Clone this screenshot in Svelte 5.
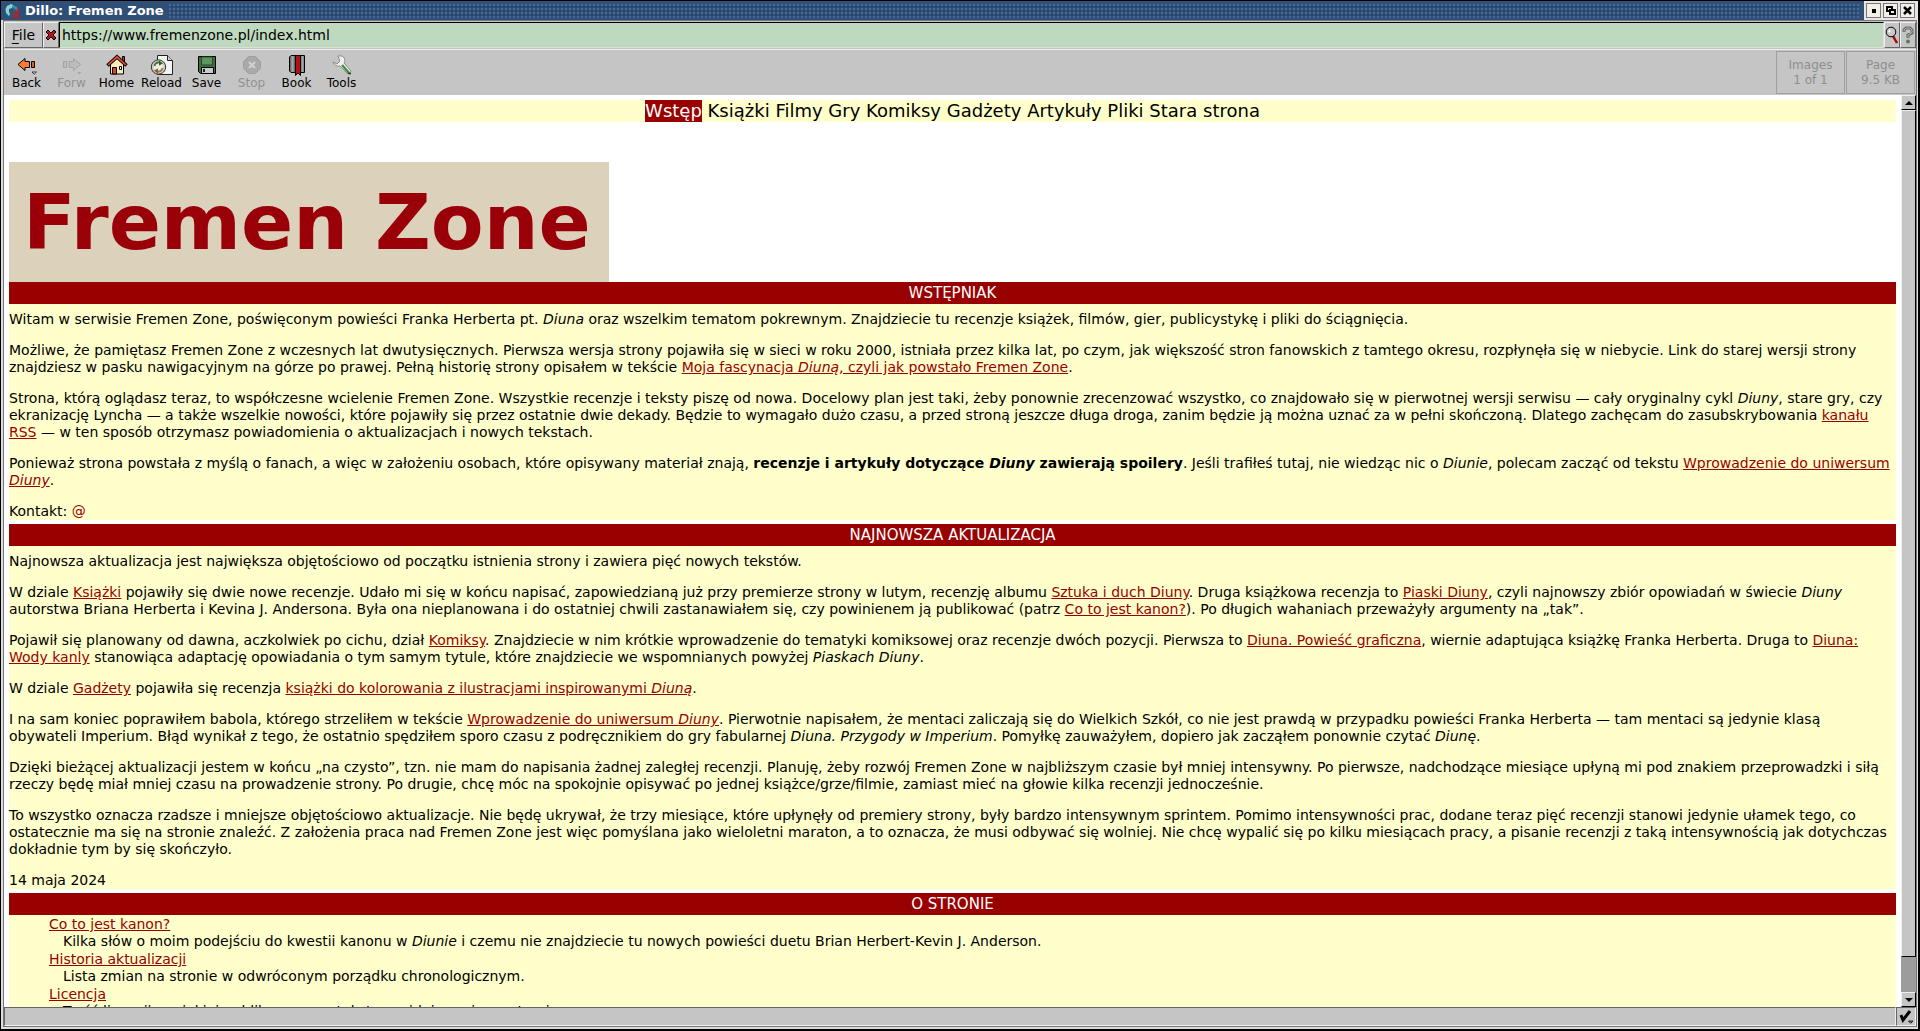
<script>
  const nav = ['Książki', 'Filmy', 'Gry', 'Komiksy', 'Gadżety', 'Artykuły', 'Pliki', 'Stara strona'];
  let url = $state('https://www.fremenzone.pl/index.html');
</script>

<div class="window">
  <header class="titlebar">
    <svg class="logo" width="16" height="16" viewBox="0 0 16 16" aria-hidden="true">
      <circle cx="7.5" cy="8" r="7" fill="#1d5c80" />
      <path d="M1.500 6 3 3 7 1l2 1-1 3-3 1v3l1 2-1 2-3-3z" fill="#8bd3cf" />
      <path d="M9 2l4 2 1 4-2-1-3-2z" fill="#3a91ae" />
      <path d="M14.500 5 13 14h2" fill="none" stroke="#d01818" stroke-width="1.600" />
      <circle cx="11" cy="11.500" r="2.500" fill="none" stroke="#d01818" stroke-width="1.600" />
    </svg>
    <h1>Dillo: Fremen Zone</h1>
    <span class="dots"></span>
    <div class="winbuttons">
      <button aria-label="Minimize"><svg width="11" height="11"><path d="M4 4h4v4H4z" /></svg></button>
      <button aria-label="Restore"><svg width="11" height="11" fill="none" stroke="#000" stroke-width="2"><path d="M2 2h5v4H2z" /><path d="M5 5h5v4H5z" fill="#f1efe6" /></svg></button>
      <button aria-label="Close"><svg width="11" height="11" stroke="#000" stroke-width="2.500"><path d="m2 2 7 7M9 2 2 9" /></svg></button>
    </div>
  </header>

  <div class="frame">
    <div class="location">
      <button class="file"><u>F</u>ile</button>
      <button class="clear" aria-label="Clear address">
        <svg width="12" height="12"><path d="M1 3 3 1l3 3 3-3 2 2-3 3 3 3-2 2-3-3-3 3-2-2 3-3z" fill="#b5121b" stroke="#000" /></svg>
      </button>
      <input type="text" aria-label="Address" bind:value={url} />
      <button class="tool" aria-label="Search">
        <svg width="14" height="18"><path d="m8 10 4 7" stroke="#b00000" stroke-width="2.500" /><circle cx="6" cy="6" r="4.800" fill="#c9c9c9" stroke="#000" /><path d="M3 5h3M4.500 3.500v3" stroke="#fff" /></svg>
      </button>
      <button class="tool" aria-label="Help">
        <svg width="12" height="18"><path d="M2 6V4l2-2h4l2 2v3L6 9v3" fill="none" stroke="#666" stroke-width="3" /><path d="M2 5.500V4l2-2h4l2 2v2.500L6 9v2.500" fill="none" stroke="#b5b5b5" /><circle cx="6" cy="15.500" r="1.500" fill="#4a8a3a" stroke="#666" /></svg>
      </button>
    </div>

    <div class="toolbar">
      <div class="actions">
        <button>
          <svg width="22" height="22"><path d="M2 10.500 9 4.500v3h4.500v6H9v3z" fill="#ff7a2a" stroke="#000" /><path d="M15.500 7.500h3v6h-3z" fill="#e85a10" stroke="#000" /><path d="M16 18h4.500L18.200 20.300z" fill="#ddd" stroke="#000" stroke-width=".7" /></svg>
          <span>Back</span>
        </button>
        <button disabled>
          <svg width="22" height="22"><path d="M19.500 10.500 12.500 4.500v3H8v6h4.500v3zM2.500 7.500h3v6h-3z" fill="#bcbcbc" stroke="#a3a3a3" /><path d="M16 18h4.500L18.200 20.300z" fill="#a3a3a3" /></svg>
          <span>Forw</span>
        </button>
        <button>
          <svg width="22" height="22"><path d="M16.500 2.500h2v6h-2z" fill="#d33" stroke="#000" /><path d="M4.500 10 11 4l6.500 6v10h-13z" fill="#fbe9c0" stroke="#000" /><path d="M1.500 11.500 11 3l9.500 8.500" fill="none" stroke="#000" stroke-width="3.600" /><path d="M2.200 10.900 11 3l8.800 7.900" fill="none" stroke="#e0502f" stroke-width="1.700" /><path d="M6.500 13.500h4V20h-4z" fill="#d4481c" stroke="#000" /><path d="M13.500 12.500h2v3h-2z" fill="#fff" stroke="#000" /></svg>
          <span>Home</span>
        </button>
        <button>
          <svg width="24" height="22"><path d="M7.500 1.500h10l5 5v14h-15z" fill="#f4f4f4" stroke="#222" /><path d="M17.500 1.500v5h5" fill="#ccc" stroke="#222" /><circle cx="8.500" cy="13" r="7.200" fill="#c9c9c4" stroke="#333" /><circle cx="8.500" cy="13" r="5" fill="#eeeede" /><path d="M4.500 12q1-4 5.500-3.500" fill="none" stroke="#456b35" stroke-width="1.800" /><path d="m9 6.500 4 3-4 2z" fill="#2d5f2d" /><path d="M12.500 14q-1 4-5.500 3.500" fill="none" stroke="#9a7a45" stroke-width="1.800" /><path d="m8 19.500-4-3 4-2z" fill="#80602f" /></svg>
          <span>Reload</span>
        </button>
        <button>
          <svg width="22" height="22"><path d="M2.500 2.500h17v17H4.500l-2-2z" fill="#3f6f41" stroke="#000" /><path d="M5.500 3h11v8h-11z" fill="#5d955f" stroke="#254a28" /><path d="M5.500 13.500h12v6h-12z" fill="#c9c9cf" stroke="#000" /><path d="M7 15h2v3H7z" fill="#222" /></svg>
          <span>Save</span>
        </button>
        <button disabled>
          <svg width="22" height="22"><path d="M7.500 2.500h7l5 5v7l-5 5h-7l-5-5v-7z" fill="#a9a9a9" stroke="#a0a0a0" /><path d="m8 8 6 6M14 8l-6 6" stroke="#d0d0d0" stroke-width="2.200" /></svg>
          <span>Stop</span>
        </button>
        <button>
          <svg width="22" height="22"><path d="M3.500 3 5 1.500h13.500v17H5L3.500 17z" fill="#6c6c6c" stroke="#000" /><path d="M6.500 2v16M16.500 2v16" stroke="#aaa" stroke-width="2" /><path d="M9.500 1.500h5v20L12 19l-2.500 2.500z" fill="#b80d14" stroke="#000" /></svg>
          <span>Book</span>
        </button>
        <button>
          <svg width="22" height="22"><path d="M7 2q6-1 7 4 0 2-1 3l7 8q0 3-3 3L9 12q-5 1-7-4l4 2 3-3z" fill="#efefef" stroke="#777" stroke-width=".8" /><path d="m11 11 8 9" stroke="#3d8a3d" stroke-width="2.200" /><path d="m17 19 3 1" stroke="#222" /></svg>
          <span>Tools</span>
        </button>
      </div>
      <div class="counter"><span>Images</span><span>1 of 1</span></div>
      <div class="counter"><span>Page</span><span>9.5 KB</span></div>
    </div>

    <div class="viewport">
      <main>
        <nav><a class="current" href="#wstep">Wstęp</a>{#each nav as item}{' '}<a href="#{item}">{item}</a>{/each}</nav>
        <div class="banner">Fremen Zone</div>

        <section>
          <h2>WSTĘPNIAK</h2>
          <div class="text">
            <p>Witam w serwisie Fremen Zone, poświęconym powieści Franka Herberta pt. <em>Diuna</em> oraz wszelkim tematom pokrewnym. Znajdziecie tu recenzje książek, filmów, gier, publicystykę i pliki do ściągnięcia.</p>
            <p>Możliwe, że pamiętasz Fremen Zone z wczesnych lat dwutysięcznych. Pierwsza wersja strony pojawiła się w sieci w roku 2000, istniała przez kilka lat, po czym, jak większość stron fanowskich z tamtego okresu, rozpłynęła się w niebycie. Link do starej wersji strony znajdziesz w pasku nawigacyjnym na górze po prawej. Pełną historię strony opisałem w tekście <a href="#historia">Moja fascynacja <em>Diuną</em>, czyli jak powstało Fremen Zone</a>.</p>
            <p>Strona, którą oglądasz teraz, to współczesne wcielenie Fremen Zone. Wszystkie recenzje i teksty piszę od nowa. Docelowy plan jest taki, żeby ponownie zrecenzować wszystko, co znajdowało się w pierwotnej wersji serwisu — cały oryginalny cykl <em>Diuny</em>, stare gry, czy ekranizację Lyncha — a także wszelkie nowości, które pojawiły się przez ostatnie dwie dekady. Będzie to wymagało dużo czasu, a przed stroną jeszcze długa droga, zanim będzie ją można uznać za w pełni skończoną. Dlatego zachęcam do zasubskrybowania <a href="#rss">kanału RSS</a> — w ten sposób otrzymasz powiadomienia o aktualizacjach i nowych tekstach.</p>
            <p>Ponieważ strona powstała z myślą o fanach, a więc w założeniu osobach, które opisywany materiał znają, <strong>recenzje i artykuły dotyczące <em>Diuny</em> zawierają spoilery</strong>. Jeśli trafiłeś tutaj, nie wiedząc nic o <em>Diunie</em>, polecam zacząć od tekstu <a href="#wprowadzenie">Wprowadzenie do uniwersum <em>Diuny</em></a>.</p>
            <p>Kontakt: <a class="plain" href="#kontakt">@</a></p>
          </div>
        </section>

        <section>
          <h2>NAJNOWSZA AKTUALIZACJA</h2>
          <div class="text">
            <p>Najnowsza aktualizacja jest największa objętościowo od początku istnienia strony i zawiera pięć nowych tekstów.</p>
            <p>W dziale <a href="#ksiazki">Książki</a> pojawiły się dwie nowe recenzje. Udało mi się w końcu napisać, zapowiedzianą już przy premierze strony w lutym, recenzję albumu <a href="#sztuka">Sztuka i duch Diuny</a>. Druga książkowa recenzja to <a href="#piaski">Piaski Diuny</a>, czyli najnowszy zbiór opowiadań w świecie <em>Diuny</em> autorstwa Briana Herberta i Kevina J. Andersona. Była ona nieplanowana i do ostatniej chwili zastanawiałem się, czy powinienem ją publikować (patrz <a href="#kanon">Co to jest kanon?</a>). Po długich wahaniach przeważyły argumenty na „tak”.</p>
            <p>Pojawił się planowany od dawna, aczkolwiek po cichu, dział <a href="#komiksy">Komiksy</a>. Znajdziecie w nim krótkie wprowadzenie do tematyki komiksowej oraz recenzje dwóch pozycji. Pierwsza to <a href="#graficzna">Diuna. Powieść graficzna</a>, wiernie adaptująca książkę Franka Herberta. Druga to <a href="#kanly">Diuna: Wody kanly</a> stanowiąca adaptację opowiadania o tym samym tytule, które znajdziecie we wspomnianych powyżej <em>Piaskach Diuny</em>.</p>
            <p>W dziale <a href="#gadzety">Gadżety</a> pojawiła się recenzja <a href="#kolorowanka">książki do kolorowania z ilustracjami inspirowanymi <em>Diuną</em></a>.</p>
            <p>I na sam koniec poprawiłem babola, którego strzeliłem w tekście <a href="#wprowadzenie">Wprowadzenie do uniwersum <em>Diuny</em></a>. Pierwotnie napisałem, że mentaci zaliczają się do Wielkich Szkół, co nie jest prawdą w przypadku powieści Franka Herberta — tam mentaci są jedynie klasą obywateli&nbsp;Imperium. Błąd wynikał z tego, że ostatnio spędziłem sporo czasu z podręcznikiem do gry fabularnej <em>Diuna. Przygody w Imperium</em>. Pomyłkę zauważyłem, dopiero jak zacząłem ponownie czytać <em>Diunę</em>.</p>
            <p>Dzięki bieżącej aktualizacji jestem w końcu „na czysto”, tzn. nie mam do napisania żadnej zaległej recenzji. Planuję, żeby rozwój Fremen Zone w najbliższym czasie był mniej intensywny. Po pierwsze, nadchodzące miesiące upłyną mi pod znakiem przeprowadzki i siłą rzeczy będę miał mniej czasu na prowadzenie strony. Po drugie, chcę móc na spokojnie opisywać po jednej książce/grze/filmie, zamiast mieć na głowie kilka recenzji jednocześnie.</p>
            <p>To wszystko oznacza rzadsze i mniejsze objętościowo aktualizacje. Nie będę ukrywał, że trzy miesiące, które upłynęły od premiery strony, były bardzo intensywnym sprintem. Pomimo intensywności prac, dodane teraz pięć recenzji stanowi jedynie ułamek tego, co ostatecznie ma się na stronie znaleźć. Z założenia praca nad Fremen Zone jest więc pomyślana jako wieloletni maraton, a to oznacza, że musi odbywać się wolniej. Nie chcę wypalić się po kilku miesiącach pracy, a pisanie recenzji z taką intensywnością jak dotychczas dokładnie tym by się skończyło.</p>
            <p>14 maja 2024</p>
          </div>
        </section>

        <section>
          <h2>O STRONIE</h2>
          <dl>
            <dt><a href="#kanon">Co to jest kanon?</a></dt>
            <dd>Kilka słów o moim podejściu do kwestii kanonu w <em>Diunie</em> i czemu nie znajdziecie tu nowych powieści duetu Brian Herbert-Kevin J. Anderson.</dd>
            <dt><a href="#aktualizacje">Historia aktualizacji</a></dt>
            <dd>Lista zmian na stronie w odwróconym porządku chronologicznym.</dd>
            <dt><a href="#licencja">Licencja</a></dt>
            <dd>Treść licencji, na jakiej publikowane są teksty znajdujące się na stronie.</dd>
          </dl>
        </section>
      </main>
      <div class="scrollbar">
        <button aria-label="Scroll up"><svg width="8" height="4"><path d="M4 0 8 4H0z" /></svg></button>
        <div class="track"><div class="thumb"></div></div>
        <button aria-label="Scroll down"><svg width="8" height="4"><path d="M4 4 8 0H0z" /></svg></button>
      </div>
    </div>

    <footer>
      <div class="status"></div>
      <button aria-label="Page bugs"><svg width="16" height="16"><path d="m3 6 2 5 7-9" fill="none" stroke="#000" stroke-width="3" /><path d="M10.500 12h4.500L12.700 14.300z" fill="#888" stroke="#000" stroke-width=".8" /></svg></button>
    </footer>
  </div>
</div>

<style>
  :global(body) { background: #000; }
  * { box-sizing: border-box; }
  button, input {
    font: inherit;
    color: inherit;
    border: 0;
    border-radius: 0;
    margin: 0;
    padding: 0;
    background: none;
  }
  .window {
    height: 100vh;
    display: flex;
    flex-direction: column;
    padding: 1px 2px 2px 1px;
    background: #000;
    color: #000;
    font: 14px/17px "DejaVu Sans", sans-serif;
    overflow: hidden;
  }
  .titlebar {
    flex: none;
    height: 19px;
    display: flex;
    align-items: center;
    gap: 5px;
    padding-left: 3px;
    background: #304f76;
    color: #fff;
  }
  h1 { margin: 0; font-size: 13px; line-height: 20px; }
  .dots {
    flex: 1;
    align-self: stretch;
    margin: 3px 0 2px;
    background:
      radial-gradient(circle at 1px 1px, #44699a 1px, transparent 1px) 0 0 / 4px 4px,
      radial-gradient(circle at 3px 3px, #294467 1px, transparent 1px) 0 0 / 4px 4px;
  }
  .winbuttons { display: flex; gap: 2px; padding: 2px 3px 2px 2px; background: #e8e4e8; }
  .winbuttons button {
    width: 15px;
    height: 15px;
    display: grid;
    place-items: center;
    background: #f1efe6;
    border: 1px solid #777;
  }
  .frame {
    flex: 1;
    min-height: 0;
    display: flex;
    flex-direction: column;
    padding: 0 1px 1px;
    background: #777;
    border: solid #dcdcdc;
    border-width: 0 1px 2px 2px;
  }
  .location {
    flex: none;
    height: 30px;
    display: flex;
    padding: 1px 0;
    background: #c5c5c5;
    border-top: 1px solid #777;
    border-bottom: 1px solid #eee;
  }
  .location button {
    display: grid;
    place-items: center;
    border: 1px solid;
    border-color: #eee #666 #666 #eee;
  }
  .location .file { display: block; width: 39px; }
  .file u { text-underline-offset: 3px; }
  .location .clear { width: 16px; }
  .location .tool { width: 16px; }
  input {
    flex: 1;
    min-width: 0;
    padding: 0 2px;
    background: #bfd9bf;
    border: 1px solid;
    border-color: #000 #ddd #ddd #000;
  }
  .toolbar {
    flex: none;
    height: 45px;
    display: flex;
    gap: 1px;
    padding: 1px 1px 1px 0;
    background: #c5c5c5;
  }
  .actions { flex: 1; display: flex; font-size: 12px; line-height: 14px; }
  .actions button {
    width: 45px;
    display: flex;
    flex-direction: column;
    align-items: center;
    padding-top: 3px;
  }
  .actions button:disabled { color: #919191; }
  .counter {
    width: 69px;
    display: flex;
    flex-direction: column;
    justify-content: center;
    text-align: center;
    border: 1px solid #a0a0a0;
    color: #8e8e8e;
    font-size: 12px;
    line-height: 15px;
  }
  .viewport {
    flex: 1;
    min-height: 0;
    display: flex;
    background: #fff;
  }
  main { flex: 1; min-width: 0; overflow: hidden; padding: 5px 5px 0; }
  a { color: #900; text-decoration: underline; }
  nav {
    background: #ffc;
    margin-bottom: 40px;
    text-align: center;
    font-size: 18px;
    line-height: 22px;
  }
  nav a { display: inline-block; color: #000; text-decoration: none; }
  nav .current { background: #900; color: #fff; }
  .banner {
    width: 600px;
    height: 120px;
    padding: 2px 0 0 14px;
    background: #dcd1bb;
    color: #9a0007;
    font-size: 77px;
    font-weight: bold;
    line-height: 118px;
    white-space: nowrap;
  }
  section { margin-bottom: 4px; background: #ffc; }
  h2 {
    margin: 0;
    background: #900;
    color: #fff;
    font-size: 15px;
    font-weight: normal;
    line-height: 22px;
    text-align: center;
  }
  .text { padding-top: 7px; }
  p { margin: 0 0 14px; }
  p:last-child { margin: 0; }
  .plain { text-decoration: none; }
  dl { margin: 0; padding: 1px 0 0 40px; }
  dd { margin: 0 0 1px 14px; }
  .scrollbar {
    flex: none;
    width: 15px;
    display: flex;
    flex-direction: column;
    background: #9c9c9c;
  }
  .scrollbar button, .thumb {
    background: #c5c5c5;
    border: 1px solid;
    border-color: #eee #000 #000 #eee;
  }
  .scrollbar button { height: 15px; display: grid; place-items: center; }
  .track { flex: 1; }
  .thumb { height: 96%; }
  footer {
    flex: none;
    height: 19px;
    display: flex;
    background: #c5c5c5;
  }
  .status { flex: 1; border: 1px solid; border-color: #666 #eee #eee #666; }
  footer button {
    width: 20px;
    display: grid;
    place-items: center;
    border: 1px solid;
    border-color: #666 #eee #eee #666;
  }
</style>
